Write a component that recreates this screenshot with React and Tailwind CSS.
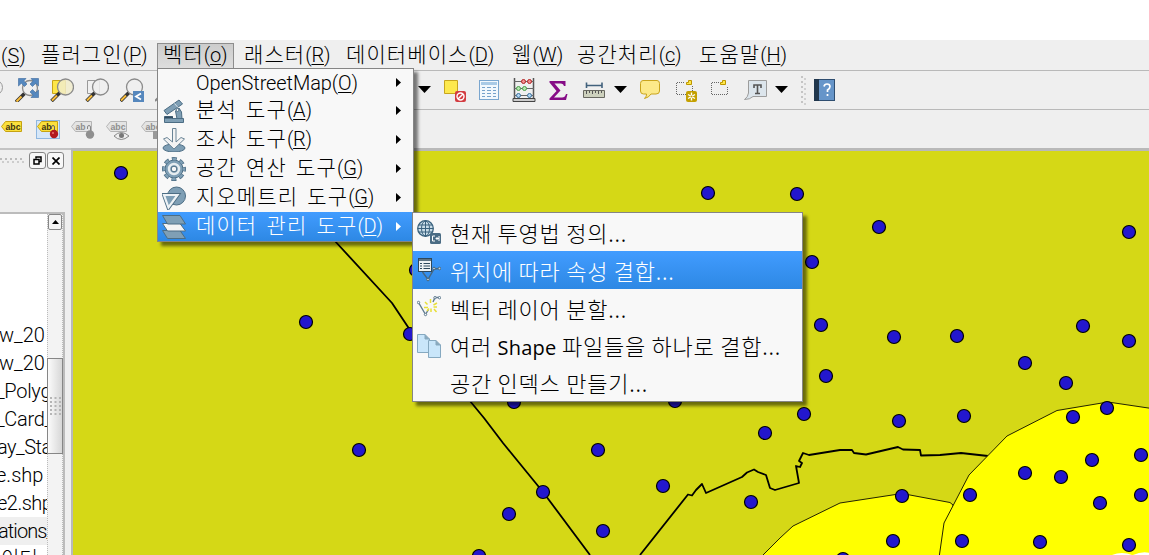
import React from 'react';

const POINTS = [
  [121, 173], [708, 193], [797, 194], [879, 227], [1129, 232], [812, 262], [306, 322], [410, 334], [416, 270],
  [821, 325], [894, 337], [957, 336], [1083, 326], [1129, 341], [1025, 363], [1066, 383], [826, 376], [514, 402],
  [675, 401], [804, 414], [899, 421], [964, 416], [1073, 417], [1107, 408], [765, 433], [359, 450], [598, 450],
  [663, 486], [543, 492], [509, 514], [603, 531], [479, 556], [751, 502], [902, 496], [970, 495], [1025, 473],
  [1061, 477], [1092, 460], [1141, 455], [1141, 495], [1100, 503], [893, 541], [962, 541], [1040, 542],
  [1129, 545], [843, 559],
];

function MapCanvas() {
  return (
    <svg className="block shrink-0" width="1076" height="404" viewBox="73 151 1076 404">
      <rect x="73" y="151" width="1076" height="404" fill="#d5d816" />
      <g fill="none" stroke="#000" strokeWidth="1.8" strokeLinejoin="round">
        <path d="M334 240L392 303L410 330L470 401L484 418L503 443L543 492L590 555" />
        <path d="M640 555L688 494.5L692 495.5L696 490L702 484L706 493L724 485L742 477L747 472.5L754 469.5L758 472L766 475L770 488L775 490L799 483L796 466L800 467L802 463L799 461L803 453L809 455L840 450L852 450L854 453L866 454.5L898 447L903 449.5L920 450L921 455.5L940 455L961 453L988 456" />
      </g>
      <g fill="#ffff00" stroke="#222200" strokeWidth="1">
        <path d="M755 563L780 538L793 526L840 503L902 493.500L950 502.500L953 505V570Z" />
        <path d="M938 565L944 523L969 475L1007 436L1057 410.500L1108 402L1155 409V570Z" />
      </g>
      <g fill="#2317cd" stroke="#000" strokeWidth="1.2">
        {POINTS.map(([x, y]) => <circle key={x + '-' + y} cx={x} cy={y} r="6.5" />)}
      </g>
      <path d="M1112 555Q1122 551 1132 555ZM1133 555Q1142 551 1150 553V555Z" fill="#fff" />
    </svg>
  );
}

function Ico({ x, y, w = 24, h = 24, className = '', children }) {
  return (
    <svg className={'block shrink-0 ' + className} width={w} height={h} viewBox={`${x} ${y} ${w} ${h}`}>
      {children}
    </svg>
  );
}

function Lens({ cx, cy, r = 8, fill = '#efefef' }) {
  return (
    <g>
      <path d={`M${cx - 5.5} ${cy + 5.5}L${cx - 14} ${cy + 14}`} stroke="#333" strokeWidth="3.600" />
      <path d={`M${cx - 8.500} ${cy + 8.500}L${cx - 13.500} ${cy + 13.500}`} stroke="#f9bd3a" strokeWidth="2" />
      <circle cx={cx} cy={cy} r={r} fill={fill} fillOpacity="0.85" stroke="#8b8b8b" strokeWidth="1.300" />
    </g>
  );
}

function Drop({ className }) {
  return (
    <svg className={'block shrink-0 ' + className} width="13" height="7" viewBox="0 0 13 7">
      <path d="M0 0H13L6.500 7Z" fill="#000" />
    </svg>
  );
}

function MapTools() {
  return (
    <div className="flex h-[39px] shrink-0 items-start border-b border-[#b9b9b9] bg-[#efefef] pt-[7px]">
      <Ico x={0} y={78} w={15}><circle cx="-5" cy="87.500" r="7.500" fill="#eee" stroke="#999" /></Ico>
      <Ico x={15} y={78}>
        <Lens cx={30} cy={88} r={7.5} />
        <g fill="#5588bf" stroke="#3b6a9e" strokeWidth="0.600">
          <path d="M18.500 78.500H26L23.800 81L27 84L24.500 86.500L21.300 83.300L18.500 86Z" />
          <path d="M38.500 78.500H31L33.200 81L30 84L32.500 86.500L35.700 83.300L38.500 86Z" />
          <path d="M38.500 97.500H31L33.200 95L30 92L32.500 89.500L35.700 92.700L38.500 90Z" />
        </g>
      </Ico>
      <Ico x={50} y={78} className="ml-[11px]">
        <path d="M52.500 80.500H65.500V93.500H52.500Z" fill="#fde648" stroke="#c8a416" />
        <Lens cx={65.5} cy={87} fill="#f1eccb" />
      </Ico>
      <Ico x={85} y={78} className="ml-[11px]">
        <path d="M87.500 80.500H99.500V93.500H87.500Z" fill="#f0f0f0" stroke="#999" />
        <Lens cx={100.5} cy={87} />
      </Ico>
      <Ico x={120} y={78} className="ml-[11px]">
        <Lens cx={134.5} cy={87} />
        <path d="M133 91H144V102H133Z" fill="#5587bd" />
        <path d="M141 93.500L136 96.500L141 99.500" fill="none" stroke="#fff" strokeWidth="1.800" />
      </Ico>
      <Ico x={155} y={78} w={14} className="ml-[11px]"><path d="M155 101L159 97" stroke="#888" strokeWidth="2" /></Ico>

      <Drop className="mt-2 ml-[249px]" />
      <Ico x={443} y={78} className="ml-[12px]">
        <path d="M444.500 80.500H457.500V93.500H444.500Z" fill="#fde94e" stroke="#c7a51e" />
        <rect x="455" y="91" width="11" height="11" rx="2" fill="#d33b40" />
        <circle cx="460.500" cy="96.500" r="3.500" fill="#d33b40" stroke="#fff" strokeWidth="1.400" />
        <path d="M458 99L463 94" stroke="#fff" strokeWidth="1.400" />
      </Ico>
      <Ico x={478} y={78} className="ml-[11px]">
        <rect x="479.500" y="80.500" width="19" height="19" fill="#f2f8fd" stroke="#7aa6cf" />
        <rect x="481" y="82" width="16" height="3" fill="#a9cae6" />
        <path d="M482 87.500H485M487 87.500H491M493 87.500H496M482 90.500H485M487 90.500H491M493 90.500H496M482 93.500H485M487 93.500H491M493 93.500H496M482 96.500H485M487 96.500H491M493 96.500H496" stroke="#76a2cb" />
      </Ico>
      <Ico x={512} y={78} className="ml-[10px]">
        <path d="M514.500 78V100M533.500 78V100" stroke="#555" strokeWidth="1.500" />
        <path d="M514 81.500H534M514 88.500H534M514 95.500H534" stroke="#666" />
        <path d="M513 98.500H535V101.500H513Z" fill="#ccc" stroke="#444" />
        <g strokeWidth="1"><g fill="#f39090" stroke="#b22222"><circle cx="523.500" cy="81.500" r="2" /><circle cx="529.500" cy="81.500" r="2" /></g>
          <g fill="#b6e8b0" stroke="#4a9d49"><circle cx="518.500" cy="88.500" r="2" /><circle cx="524.500" cy="88.500" r="2" /></g>
          <g fill="#b5d7f3" stroke="#396f9c"><circle cx="518.500" cy="95.500" r="2" /><circle cx="529.500" cy="95.500" r="2" /></g></g>
      </Ico>
      <Ico x={547} y={78} className="ml-[11px]">
        <path d="M549.500 81H565.500V86H564Q563.500 83.500 561 83.500H554.500L560.500 90.500L554 97.500H562Q565 97.500 566 94H567.500L566 100H549.500V98.500L556.500 91L549.500 82.500Z" fill="#860c86" />
      </Ico>
      <Ico x={582} y={78} className="ml-[11px]">
        <path d="M586 85.500H602M586.500 82.500V88M602 82.500V88" fill="none" stroke="#41617c" strokeWidth="1.600" />
        <path d="M583.500 90.500H604.500V97.500H583.500Z" fill="#cdd1bd" stroke="#686860" />
        <path d="M586.500 91V94M589.500 91V93M592.500 91V94M595.500 91V93M598.500 91V94M601.500 91V93" stroke="#555" />
      </Ico>
      <Drop className="mt-2 ml-[8px]" />
      <Ico x={639} y={78} className="ml-[12px]">
        <path d="M643 80.500H657Q659.500 80.500 659.500 83.500V91Q659.500 94 656 94H651Q649 97.500 644.500 98.500Q647 96 646.500 94H643.500Q640.500 94 640.500 91V83.500Q640.500 80.500 643 80.500Z" fill="#fce98a" stroke="#c9a41e" />
      </Ico>
      <Ico x={674} y={78} className="ml-[11px]">
        <path d="M684 82.500H676.500V94.500H686M692.500 86V91" fill="none" stroke="#666" strokeDasharray="1 1" />
        <path d="M688.500 80.500H691.500V84.500H686.500V82.500H688.500Z" fill="#fee84a" stroke="#bd9600" />
        <rect x="686" y="91" width="11" height="11" rx="2" fill="#c4a000" />
        <path d="M691.500 92.500V100.500M688 94.500L695 98.500M695 94.500L688 98.500" stroke="#fff" strokeWidth="1.400" />
        <circle cx="691.500" cy="96.500" r="1" fill="#c4a000" />
      </Ico>
      <Ico x={709} y={78} className="ml-[11px]">
        <path d="M719 82.500H711.500V94.500H727.500V86" fill="none" stroke="#666" strokeDasharray="1 1" />
        <path d="M722.500 80.500H725.500V84.500H720.500V82.500H722.500Z" fill="#fee84a" stroke="#bd9600" />
      </Ico>
      <Ico x={744} y={78} className="ml-[11px]">
        <path d="M748.500 80.500H766.500V96.500H753Q750 99.500 744.500 99.500Q748 97 748.500 93Z" fill="#dce5ec" stroke="#9c9c9c" />
        <path d="M754 88V85H761V88M757.500 85V94M755 93.500H760" fill="none" stroke="#555" strokeWidth="1.600" />
      </Ico>
      <Drop className="mt-2 ml-[7px]" />
      <Ico x={802} y={75} w={6} h={29} className="-mt-[2px] ml-[13px]">
        <path d="M803 75V104" stroke="#c4c4c4" strokeWidth="2" strokeDasharray="2 3" />
        <path d="M806 77V104" stroke="#d0d0d0" strokeWidth="2" strokeDasharray="2 3" />
      </Ico>
      <Ico x={814} y={78} className="ml-[6px]">
        <rect x="815.500" y="79.500" width="20" height="21" fill="#6695c9" stroke="#2f4e70" />
        <rect x="815" y="79" width="5" height="22" fill="#20364c" />
        <path d="M825 86.500Q825.500 84 828 84Q831 84 831 86.500Q831 88.500 828.500 90V92M828.500 94V96" fill="none" stroke="#fff" strokeWidth="1.700" />
      </Ico>
    </div>
  );
}

function Tag({ x, gray = false, text }) {
  return (
    <g>
      <path d={`M${x} 126.500L${x + 4} 121.500H${x + 20}V131.500H${x + 4}Z`} fill={gray ? '#e4e4e4' : '#fbe03c'} stroke={gray ? '#b4b4b4' : '#c6a210'} />
      <text x={x + 4} y="130" fontSize="9.500" fontWeight="700" fontFamily="Liberation Sans, sans-serif" textLength={text.length * 5} lengthAdjust="spacingAndGlyphs" fill={gray ? '#8e8e8e' : '#3c3410'}>{text}</text>
    </g>
  );
}

function LabelTools() {
  return (
    <div className="flex h-[38px] shrink-0 items-start gap-[11px] bg-[#efefef] pt-[8px]">
      <Ico x={0} y={118}><Tag x={1.5} text="abc" /></Ico>
      <Ico x={35} y={118} w={26}>
        <rect x="36.500" y="120.500" width="23" height="18" fill="#d6e7f8" stroke="#8fb7e0" />
        <Tag x={37.5} text="ab" />
        <path d="M51.500 129V127Q51.500 125.500 53 125.500Q54.500 125.500 54.500 127V131" fill="none" stroke="#666" />
        <circle cx="54" cy="134" r="4.200" fill="#b31b1f" /><circle cx="53" cy="133" r="1" fill="#ec7777" />
      </Ico>
      <Ico x={71} y={118} w={25} className="-ml-px">
        <Tag x={71.5} gray text="ab" />
        <path d="M87.500 129V127Q87.500 125.500 89 125.500Q90.500 125.500 90.500 127V131" fill="none" stroke="#888" />
        <circle cx="90" cy="134.500" r="4.200" fill="#8f8f8f" />
      </Ico>
      <Ico x={106} y={118} w={25} className="-ml-px">
        <Tag x={106.5} gray text="abc" />
        <path d="M114 136Q121 129 129 136Q121 143 114 136Z" fill="#eee" stroke="#888" /><circle cx="121.500" cy="135.500" r="2.500" fill="#777" />
      </Ico>
      <Ico x={141} y={118} w={25} className="-ml-px"><Tag x={141.5} gray text="abc" /><rect x="153" y="131" width="8" height="8" fill="#999" /></Ico>
    </div>
  );
}

/* Hangul with wide tracking, followed by a tight mnemonic in parentheses */
function Caption({ ko, mnemonic }) {
  return (
    <span className="flex items-baseline whitespace-pre font-light">
      <span className="text-[21px] tracking-[1.1px] [word-spacing:3px]">{ko}</span>
      <span className="text-[20px] tracking-[-0.2px]">(<span className="underline decoration-1 underline-offset-2">{mnemonic}</span>)</span>
    </span>
  );
}

function MenuBar() {
  return (
    <div className="flex h-[31px] shrink-0 items-center border-b border-[#b9b9b9] bg-[#efefef] pt-[2px]">
      <div className="w-[41px] pl-px text-[20px] font-light">(<span className="underline decoration-1 underline-offset-2">S</span>)</div>
      <div className="w-[116px]"><Caption ko="플러그인" mnemonic="P" /></div>
      <div className="flex h-[26px] w-[77px] items-center border border-[#8d8d8d] bg-gradient-to-b from-[#cccccc] to-[#dedede] pl-[5px]"><Caption ko="벡터" mnemonic="o" /></div>
      <div className="w-[112px] pl-[10px]"><Caption ko="래스터" mnemonic="R" /></div>
      <div className="w-[166px]"><Caption ko="데이터베이스" mnemonic="D" /></div>
      <div className="w-[65px]"><Caption ko="웹" mnemonic="W" /></div>
      <div className="w-[122px]"><Caption ko="공간처리" mnemonic="c" /></div>
      <div><Caption ko="도움말" mnemonic="H" /></div>
    </div>
  );
}

const LAYERS = [
  { name: 'w_20', fit: '-ml-px' },
  { name: 'w_20', fit: '-ml-px' },
  { name: '_Polyg', fit: '-ml-[4px] tracking-[-0.3px]' },
  { name: '_Card_', fit: '-ml-[4px] tracking-[-0.3px]' },
  { name: 'ay_Sta', fit: '-ml-[3px] tracking-[-0.5px]' },
  { name: 'e.shp', fit: '-ml-[4px]' },
  { name: 'e2.shp', fit: '-ml-[3px] tracking-[-0.5px]' },
  { name: 'ations_', fit: '-ml-[2px] tracking-[-0.9px]' },
  { name: '이터', fit: 'ml-px' },
];

function LayerPanel() {
  return (
    <div className="flex w-[71px] shrink-0 flex-col bg-[#efefef]">
      <div className="flex h-[62px] shrink-0 items-start pt-[2px]">
        <svg className="mt-[6px] block" width="25" height="6" viewBox="0 0 25 6">
          <path d="M0 1H25" stroke="#bbb" strokeWidth="2" strokeDasharray="2 3" /><path d="M2 4H25" stroke="#ccc" strokeWidth="2" strokeDasharray="2 3" />
        </svg>
        <div className="ml-[4px] flex gap-px">
          <div className="flex h-[17px] w-[17px] items-center justify-center rounded-[3px] border border-[#858585] bg-[#f8f8f8]">
            <svg width="9" height="9" viewBox="0 0 9 9"><path d="M3 2.500V1H8V5.500H6M1 3.500H6V8H1Z" fill="none" stroke="#000" strokeWidth="1.500" /></svg>
          </div>
          <div className="flex h-[17px] w-[17px] items-center justify-center rounded-[3px] border border-[#858585] bg-[#f8f8f8]">
            <svg width="8" height="8" viewBox="0 0 8 8"><path d="M0.500 0.500L7.500 7.500M7.500 0.500L0.500 7.500" stroke="#000" strokeWidth="1.700" /></svg>
          </div>
        </div>
      </div>
      <div className="flex min-h-0 w-[65px] flex-1 overflow-hidden border-t-2 border-r-2 border-[#bcbcbc] bg-white">
        <div className="w-[47px] shrink-0 overflow-hidden pt-[107px] text-[20px] font-light">
          {LAYERS.map(({ name, fit }, i) => (
            <div key={i} className={i === 7 ? 'h-[28px] bg-[#efefef] leading-[28px] whitespace-nowrap' : 'h-[28px] leading-[28px] whitespace-nowrap'}>
              <div className={fit}>{name}</div>
            </div>
          ))}
        </div>
        <div className="flex w-[16px] flex-col border-x border-dotted border-[#bbb] bg-[#f3f3f3]">
          <div className="flex h-[16px] shrink-0 items-center justify-center rounded-[2px] border border-[#868686] bg-[#f4f4f4]">
            <svg width="7" height="4" viewBox="0 0 7 4"><path d="M0 4L3.500 0L7 4Z" /></svg>
          </div>
          <div className="-mx-px mt-[128px] flex h-[96px] shrink-0 items-center justify-center border border-[#868686] bg-gradient-to-r from-[#fbfbfb] to-[#d7d7d7]">
            <svg width="11" height="19" viewBox="0 0 11 19"><path d="M1 0V19M5.500 0V19M10 0V19" stroke="#b5b5b5" strokeWidth="2" strokeDasharray="2 2" /></svg>
          </div>
        </div>
      </div>
    </div>
  );
}

const SLATE = '#7f9fb5';
const EDGE = '#4c6d84';

const MENU = [
  { ko: 'OpenStreetMap', k: 'O', h: 'h-[27px]' },
  {
    ko: '분석 도구', k: 'A', h: 'h-[29px]',
    icon: <g fill={SLATE} stroke={EDGE}><path d="M13.500 12L17 9L19.500 13L20 20H15Z" /><path d="M2.500 17.500H10.500V19.500H21.500V23.500H2.500Z" /><path d="M2.500 18.500H11" stroke="#2f4b60" strokeWidth="2" /><path d="M2 11.500L17 1L20.500 5L5 15.500Z" /><path d="M12.500 4.500L16 8.500" stroke="#d4dfe6" /><circle cx="15.500" cy="11" r="1.500" fill="#f2f5f7" /></g>,
  },
  {
    ko: '조사 도구', k: 'R', h: 'h-[29px]',
    icon: <g><ellipse cx="12" cy="20" rx="11" ry="4" fill={SLATE} stroke={EDGE} /><path d="M10.500 0.500H14V14L19 9.500L22.500 11L12 21L1.500 11L5 9.500L10.500 14Z" fill="#f3f3f3" stroke="#6a8496" /></g>,
  },
  {
    ko: '공간 연산 도구', k: 'G', h: 'h-[29px]',
    icon: <g><circle cx="12" cy="12" r="10" fill="none" stroke={EDGE} strokeWidth="4" strokeDasharray="4.800 3.054" strokeDashoffset="2.400" /><circle cx="12" cy="12" r="9" fill={SLATE} stroke={EDGE} /><circle cx="12" cy="12" r="10" fill="none" stroke={SLATE} strokeWidth="2.400" strokeDasharray="3.600 4.254" strokeDashoffset="1.800" /><circle cx="12" cy="12" r="5" fill="none" stroke="#e7edf0" strokeWidth="2.500" /><circle cx="12" cy="12" r="2.800" fill="#f7f7f7" stroke={EDGE} /></g>,
  },
  {
    ko: '지오메트리 도구', k: 'G', h: 'h-[29px]',
    icon: <g><circle cx="14.500" cy="10" r="9" fill={SLATE} stroke={EDGE} /><path d="M2 9H15.500L6.500 21.500Z" fill="none" stroke={EDGE} strokeWidth="4" /><path d="M2 9H15.500L6.500 21.500Z" fill={SLATE} stroke="#edf2f5" strokeWidth="2.200" /></g>,
  },
  {
    ko: '데이터 관리 도구', k: 'D', h: 'h-[29px]', active: true,
    icon: <g stroke={EDGE}><path d="M0.500 15.500H18L23.500 23.500H5.500Z" fill={SLATE} /><path d="M0.500 8.500H18L23.500 16H5.500Z" fill="#f4f4f4" /><path d="M0.500 0.500H18L23.500 9H5.500Z" fill={SLATE} /></g>,
  },
];

function VectorMenu() {
  return (
    <div className="absolute top-[68px] left-[157px] w-[257px] border border-[#858585] bg-[#f8f8f8] shadow-[4px_4px_3px_rgba(0,0,0,0.5)]">
      {MENU.map(({ ko, k, h, icon, active }) => (
        <div key={ko} className={`flex items-center ${h} ${active ? 'bg-gradient-to-b from-[#419cff] to-[#2d88e4] text-white' : ''}`}>
          <svg className="mr-[10px] ml-[4px] block shrink-0" width="24" height="24" viewBox="0 0 24 24">{icon}</svg>
          {icon ? <Caption ko={ko} mnemonic={k} /> : (
            <span className="text-[20px] font-light tracking-[-0.1px]">{ko}(<span className="underline decoration-1 underline-offset-2">{k}</span>)</span>
          )}
          <svg className="mr-[12px] ml-auto block shrink-0" width="5" height="9" viewBox="0 0 5 9"><path d="M0 0L5 4.500L0 9Z" fill="currentColor" /></svg>
        </div>
      ))}
    </div>
  );
}

const SUBMENU = [
  {
    text: '현재 투영법 정의...', h: 'h-[38px]',
    icon: <g><circle cx="8.500" cy="8.500" r="7.800" fill="#c9dce8" stroke="#39617d" strokeWidth="1.300" /><path d="M8.500 1V16.500M1 8.500H16M2 5H15M2 12H15" stroke="#39617d" /><ellipse cx="8.500" cy="8.500" rx="4" ry="7.500" fill="none" stroke="#39617d" /><rect x="13" y="13" width="11" height="11" rx="1.500" fill="#4b6c84" /><path d="M18 16H15.500V21H18M22 16V18.500H19M20.500 17L19 18.500L20.500 20M22 18.500V21" fill="none" stroke="#fff" /></g>,
  },
  {
    text: '위치에 따라 속성 결합...', h: 'h-[38px]', active: true,
    icon: <g fill="none" stroke="#47677f"><path d="M5.500 14L11 21.500L17 11L22 10.500" strokeWidth="1.400" /><rect x="1.500" y="0.500" width="13" height="13" fill="#edf2f5" stroke="#2d485d" /><path d="M2 2H14" stroke="#2d485d" strokeWidth="1.500" /><path d="M3 5.500H5M6.500 5.500H13M3 8H5M6.500 8H13M3 10.500H5M6.500 10.500H13" stroke="#2d485d" /><circle cx="11" cy="21.500" r="1.300" fill="#c6d5df" /><circle cx="17" cy="10.500" r="1.300" fill="#c6d5df" /><circle cx="22.500" cy="10.500" r="1.300" fill="#c6d5df" /></g>,
  },
  {
    text: '벡터 레이어 분할...', h: 'h-[38px]',
    icon: <g fill="none" stroke="#5f7a8e"><path d="M1.500 6.500L8.500 18.500L11.500 13.500M16 6L18 1.500L22.500 1.500" strokeWidth="1.400" /><path d="M8 6L10.500 8.500M13.500 3V7M20 7L16.500 9M17 13L19.500 16M14 12.500V16M7 11.500H11M16.500 11H20M10 15L12 12.500" stroke="#e8df38" strokeWidth="1.500" /><circle cx="1.500" cy="6.500" r="1.200" fill="#fff" /><circle cx="8.500" cy="18.500" r="1.200" fill="#fff" /><circle cx="18" cy="1.700" r="1.200" fill="#fff" /><circle cx="22.500" cy="1.700" r="1.200" fill="#fff" /></g>,
  },
  {
    text: '여러 ', latin: 'Shape', rest: ' 파일들을 하나로 결합...', h: 'h-[37px]',
    icon: <g fill="#c9e6fa" stroke="#86a9c0"><path d="M0.500 0.500H8L12.500 5V18.500H0.500Z" /><path d="M8 0.500V5H12.500" fill="#8aa9bd" /><path d="M11.500 6.500H19L23.500 11V23.500H11.500Z" /><path d="M19 6.500V11H23.500" fill="#8aa9bd" /></g>,
  },
  { text: '공간 인덱스 만들기...', h: 'h-[37px]' },
];

function DataMenu() {
  return (
    <div className="absolute top-[212px] left-[412px] w-[391px] border border-[#858585] bg-[#f8f8f8] font-['Noto_Sans_CJK_KR',sans-serif] shadow-[4px_4px_3px_rgba(0,0,0,0.5)]">
      {SUBMENU.map(({ text, latin, rest, h, icon, active }) => (
        <div key={text} className={`flex items-center text-[22px] whitespace-nowrap ${h} ${active ? 'bg-gradient-to-b from-[#419cff] to-[#2d88e4] text-white' : ''}`}>
          <svg className="mr-[9px] ml-[4px] block shrink-0" width="24" height="24" viewBox="0 0 24 24">{icon}</svg>
          <span className="font-light tracking-[0.75px] whitespace-pre">
            {text}
            {latin && <span className="font-['Open_Sans',sans-serif] text-[20px] leading-none font-normal tracking-[0.2px]">{latin}</span>}
            {rest}
          </span>
        </div>
      ))}
    </div>
  );
}

export default function App() {
  return (
    <div className="relative flex h-[555px] w-[1149px] flex-col overflow-hidden bg-white pt-[40px] font-['Roboto','Noto_Sans_CJK_KR',sans-serif] text-black">
      <MenuBar />
      <MapTools />
      <LabelTools />
      <div className="flex min-h-0 flex-1 bg-[#efefef]">
        <div className="flex border-t-2 border-[#c3c3c3]"><LayerPanel /></div>
        <div className="border-t-[3px] border-l-2 border-[#b9b9b9]"><MapCanvas /></div>
      </div>
      <VectorMenu />
      <DataMenu />
    </div>
  );
}
